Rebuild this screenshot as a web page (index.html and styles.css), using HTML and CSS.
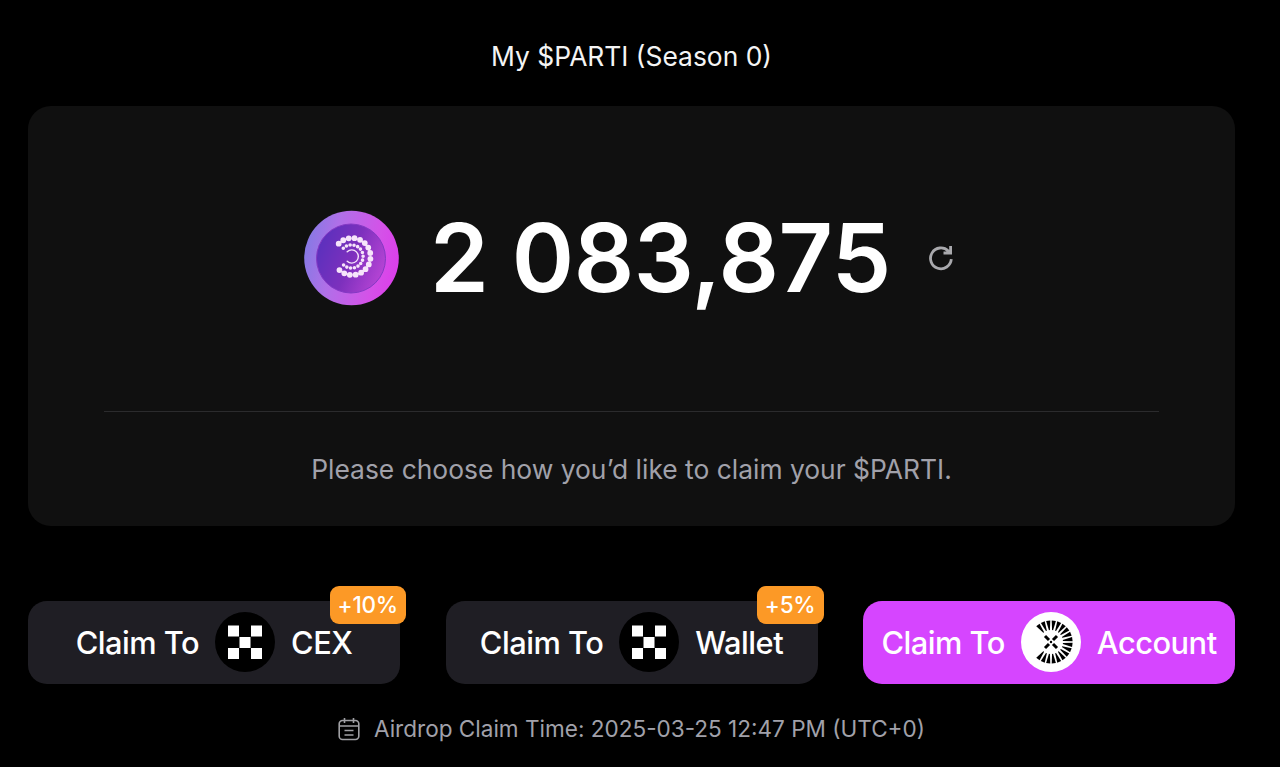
FILE: index.html
```html
<!DOCTYPE html>
<html lang="en">
<head>
    <meta charset="UTF-8">
    <title>Claim $PARTI</title>
    <link rel="stylesheet" href="styles.css">
</head>
<body>
    <h1 class="title">My $PARTI (Season 0)</h1>
    <div class="card">
        <div class="balance">
            <svg class="coin" viewBox="0 0 96 96">
                <defs>
                    <linearGradient id="rim" x1="0" y1="0.4" x2="1" y2="0.6">
                        <stop offset="0" stop-color="#8679e4"/>
                        <stop offset="0.3" stop-color="#b070e8"/>
                        <stop offset="0.75" stop-color="#d452e8"/>
                        <stop offset="1" stop-color="#dc3eea"/>
                    </linearGradient>
                    <linearGradient id="face" x1="0" y1="0.3" x2="1" y2="0.7">
                        <stop offset="0" stop-color="#5a30bd"/>
                        <stop offset="0.5" stop-color="#7d30bd"/>
                        <stop offset="1" stop-color="#b945d6"/>
                    </linearGradient>
                </defs>
                <circle cx="48.5" cy="48" r="47.3" fill="url(#rim)"/>
                <circle cx="48" cy="48.5" r="34.5" fill="url(#face)" stroke="#8439c4" stroke-width="1"/>
                <g fill="none" stroke="#f6e4fa" stroke-linecap="round">
                    <path d="M35.7 33.7A18.5 18.5 0 1 1 35.7 59.3" stroke-width="5.8" stroke-dasharray="0 5.75"/>
                    <path d="M40.3 38.3A11.6 11.6 0 1 1 40.3 54.7" stroke-width="3.6" stroke-dasharray="0 3.85"/>
                    <path d="M44.2 41.7A6.6 6.6 0 1 1 44.2 51.3" stroke-width="1.4"/>
                </g>
            </svg>
            <span class="amount">2 083,875</span>
            <svg class="refresh" viewBox="0 0 28 28">
                <path d="M24.3 15.2A10.4 10.4 0 1 1 21.3 7L23.5 9M23.6 2V9H16.5" fill="none" stroke="#a9a9ad" stroke-width="2.8"/>
            </svg>
        </div>
        <p class="hint">Please choose how you’d like to claim your $PARTI.</p>
    </div>
    <div class="actions">
        <button class="claim">
            <span>Claim To</span>
            <svg class="logo" viewBox="0 0 60 60">
                <circle cx="30" cy="30" r="30" fill="#000"/>
                <path d="M13 13.5h11v11H13zM36 13.5h11v11H36zM24.5 25h11v11h-11zM13 36h11v11H13zM36 36h11v11H36z" fill="#fff"/>
            </svg>
            <span>CEX</span>
            <span class="badge">+10%</span>
        </button>
        <button class="claim">
            <span>Claim To</span>
            <svg class="logo" viewBox="0 0 60 60">
                <circle cx="30" cy="30" r="30" fill="#000"/>
                <path d="M13 13.5h11v11H13zM36 13.5h11v11H36zM24.5 25h11v11h-11zM13 36h11v11H13zM36 36h11v11H36z" fill="#fff"/>
            </svg>
            <span>Wallet</span>
            <span class="badge">+5%</span>
        </button>
        <button class="claim primary">
            <span>Claim To</span>
            <svg class="logo" viewBox="0 0 60 60">
                <defs>
                    <path id="ray" d="M-2.1 -21.5H2.1L0.5 -12H-0.5z"/>
                    <g id="rays">
                        <use href="#ray" transform="rotate(-37.5)"/>
                        <use href="#ray" transform="rotate(-22.5)"/>
                        <use href="#ray" transform="rotate(-7.5)"/>
                        <use href="#ray" transform="rotate(7.5)"/>
                        <use href="#ray" transform="rotate(22.5)"/>
                        <use href="#ray" transform="rotate(37.5)"/>
                        <use href="#ray" transform="rotate(52.5)"/>
                        <use href="#ray" transform="rotate(67.5)"/>
                        <use href="#ray" transform="rotate(82.5)"/>
                    </g>
                </defs>
                <circle cx="30" cy="30" r="30" fill="#fff"/>
                <g transform="translate(30 30)">
                    <use href="#rays"/>
                    <use href="#rays" transform="scale(1 -1)"/>
                    <path d="M-6 -6L-2 -2M6 -6L2 -2M-6 6L-2 2M6 6L2 2" stroke="#000" stroke-width="3"/>
                    <circle r="1.2"/>
                </g>
            </svg>
            <span>Account</span>
        </button>
    </div>
    <div class="time">
        <svg class="calendar" viewBox="0 0 22 24">
            <path d="M4.5 3.5h13a3.3 3.3 0 0 1 3.3 3.3v12.4a3.3 3.3 0 0 1-3.3 3.3h-13a3.3 3.3 0 0 1-3.3-3.3V6.8a3.3 3.3 0 0 1 3.3-3.3zM1.2 9h19.6M6.5 1v5M15.5 1v5M6.5 13.5h9M6.5 18h9" fill="none" stroke="#a0a0a4" stroke-width="1.6"/>
        </svg>
        <span>Airdrop Claim Time: 2025-03-25 12:47 PM (UTC+0)</span>
    </div>
</body>
</html>
```
FILE: styles.css
```css
* {
    box-sizing: border-box;
}
body {
    margin: 0;
    padding: 39px 45px 0 28px;
    height: 767px;
    overflow: hidden;
    background: #000;
    color: #fff;
    font-family: Inter, sans-serif;
}
.title {
    margin: 0 0 32.5px;
    font-size: 26.4px;
    font-weight: 400;
    line-height: 34px;
    text-align: center;
    color: #f4f4f4;
}
.card {
    height: 420px;
    padding: 0 76px;
    border-radius: 23px;
    background: #101010;
}
.balance {
    display: flex;
    align-items: center;
    height: 306px;
    padding-bottom: 1px;
    padding-left: 199px;
    border-bottom: 1px solid #2b2b2d;
}
.coin {
    width: 96px;
    height: 96px;
}
.amount {
    margin: 0 36px 0 31px;
    font-size: 94.6px;
    font-weight: 600;
    line-height: 110px;
    letter-spacing: -0.5px;
    white-space: nowrap;
}
.refresh {
    width: 28px;
    height: 28px;
}
.hint {
    margin: 40px 0 0;
    font-size: 26.4px;
    line-height: 34px;
    text-align: center;
    color: #a1a1aa;
}
.actions {
    display: grid;
    grid-template-columns: repeat(3, 372px);
    justify-content: space-between;
    margin-top: 75.5px;
}
.claim {
    position: relative;
    display: flex;
    align-items: center;
    justify-content: center;
    gap: 16px;
    height: 83px;
    padding: 0 0 1px;
    border: 0;
    border-radius: 19px;
    background: #1f1e24;
    color: #fff;
    font-family: inherit;
    font-size: 30.8px;
    font-weight: 550;
    letter-spacing: -0.5px;
    white-space: nowrap;
}
.primary {
    background: #d645ff;
}
.logo {
    width: 60px;
    height: 60px;
}
.badge {
    position: absolute;
    top: -15px;
    right: -6px;
    height: 38px;
    padding: 0 8px;
    border-radius: 9px;
    background: #fc9926;
    font-size: 22.5px;
    letter-spacing: -0.2px;
    line-height: 37px;
}
.time {
    display: flex;
    align-items: center;
    justify-content: center;
    gap: 14px;
    margin-top: 30px;
    font-size: 22.55px;
    line-height: 30px;
    color: #a1a1aa;
}
.calendar {
    width: 22px;
    height: 24px;
}
```
